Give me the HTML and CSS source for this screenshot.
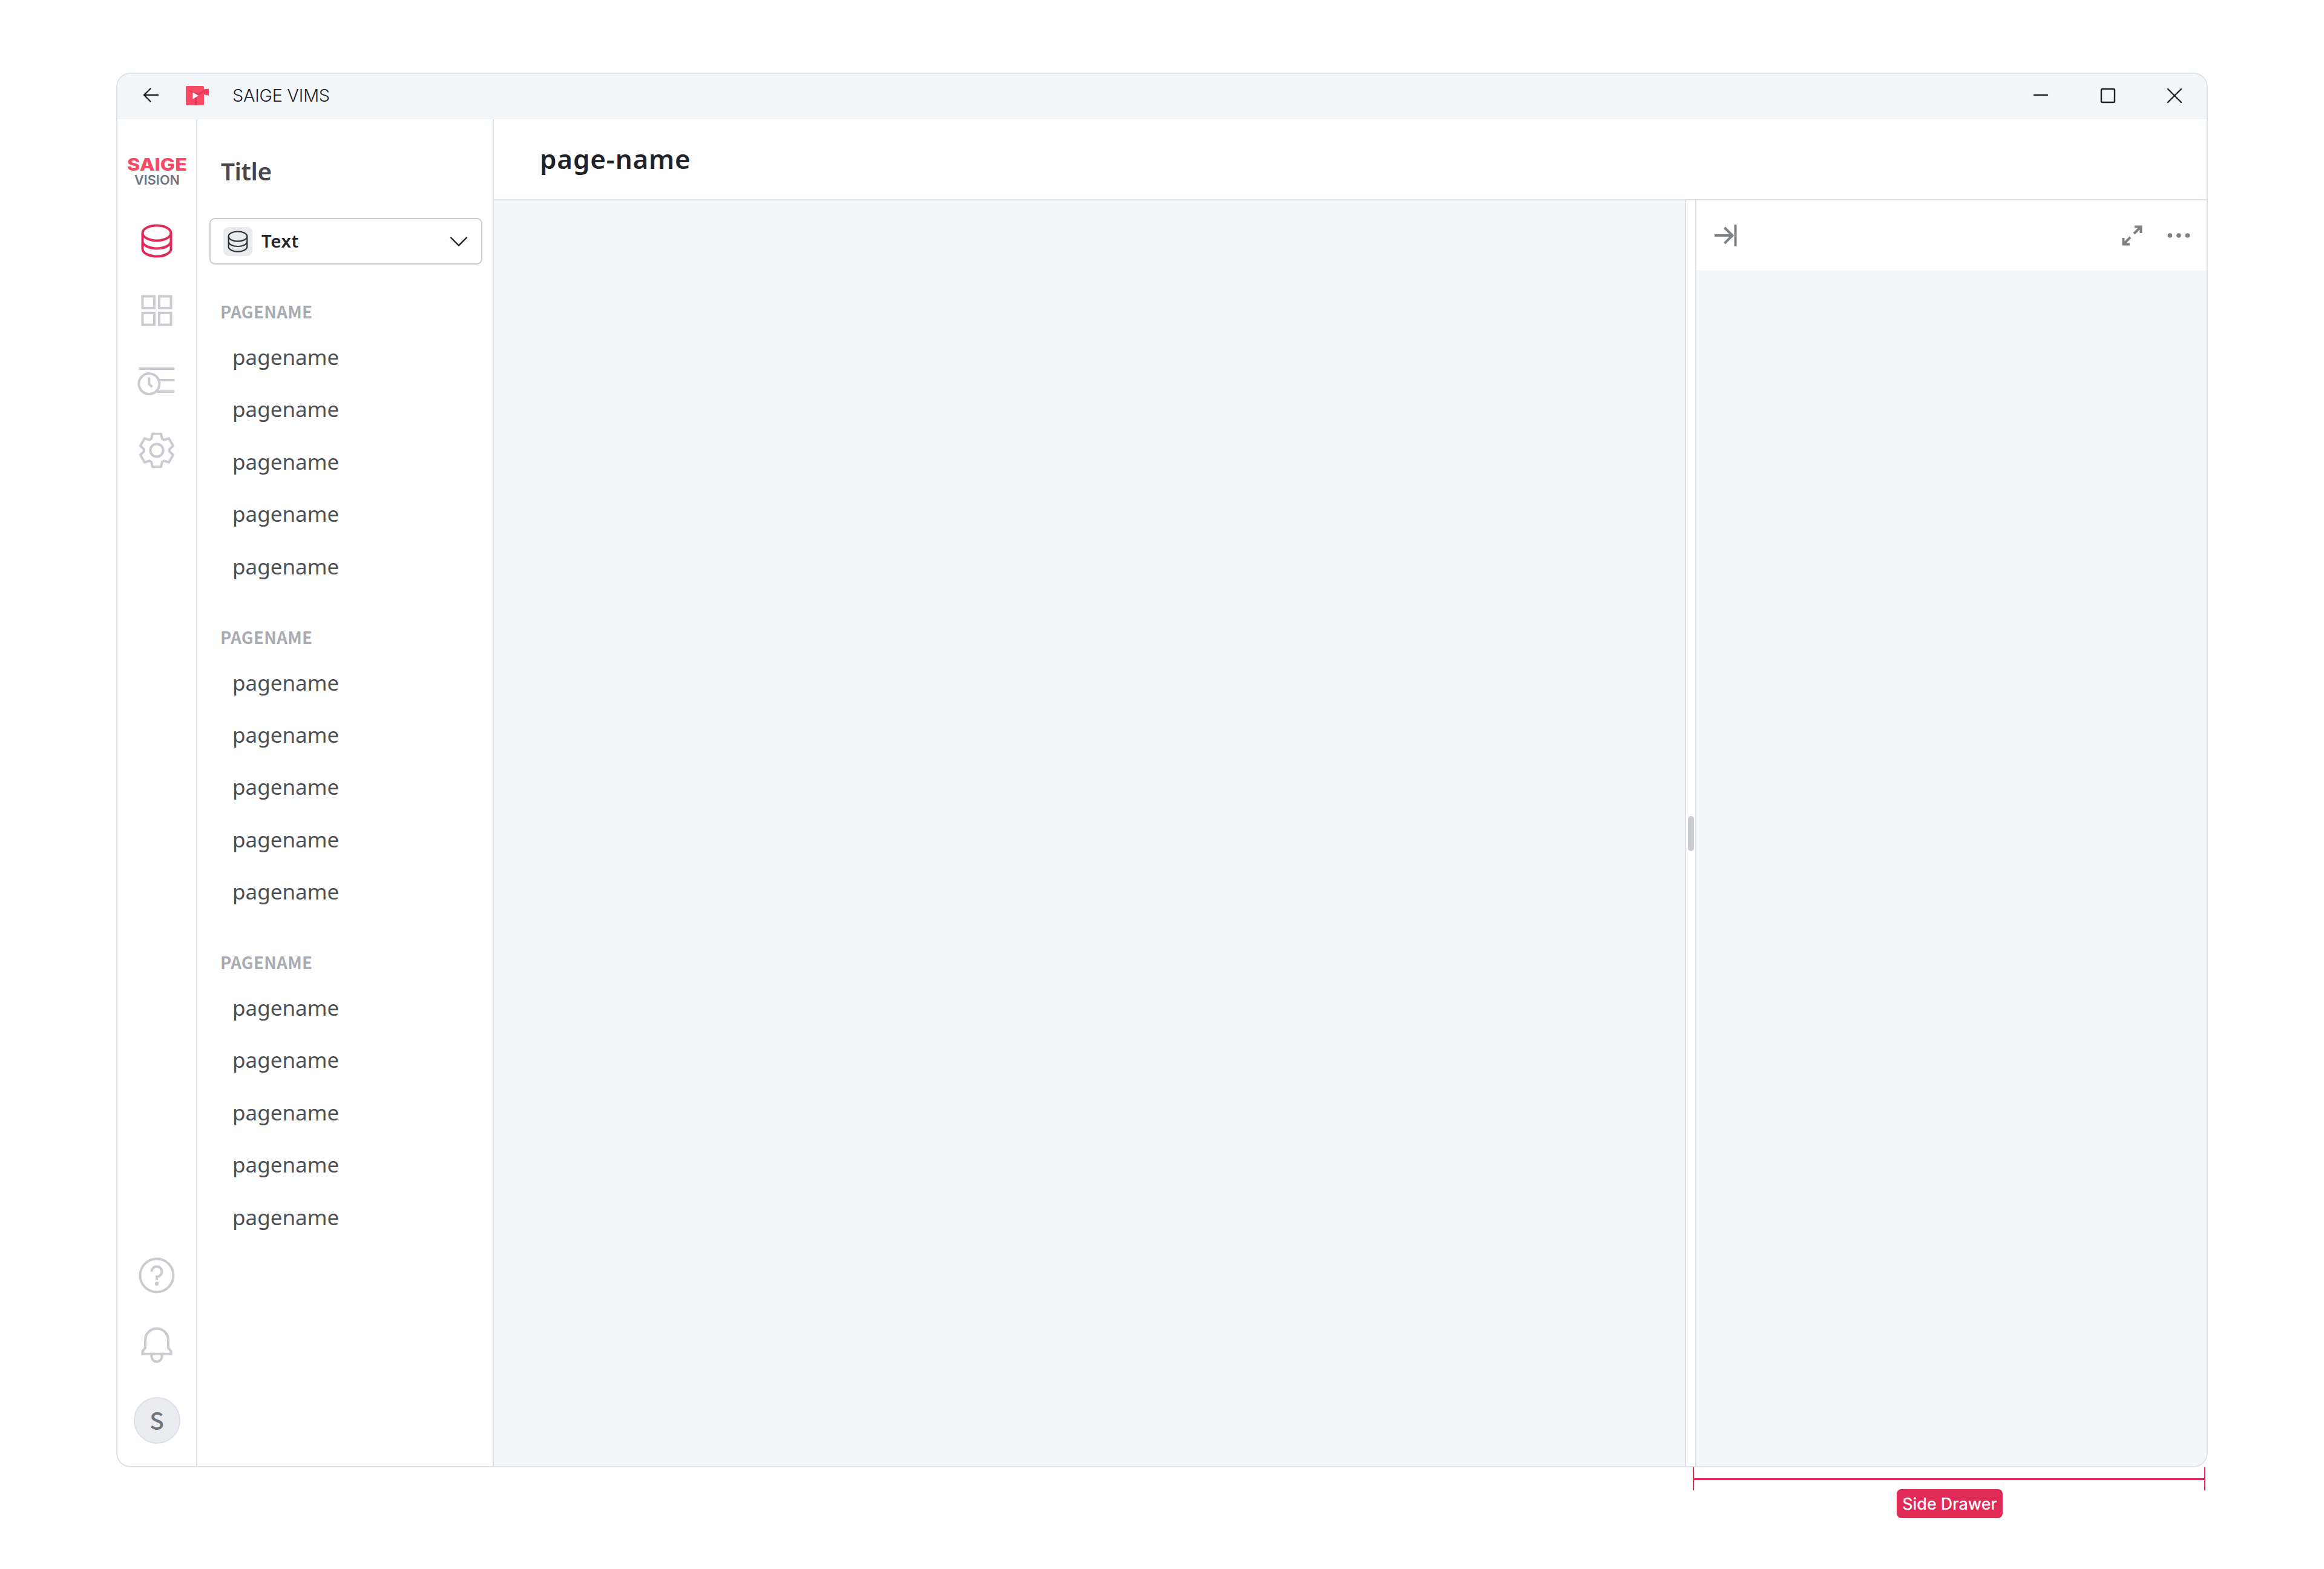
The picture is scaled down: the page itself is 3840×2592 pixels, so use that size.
FILE: index.html
```
<!DOCTYPE html>
<html lang="en">
<head>
    <meta charset="UTF-8">
    <meta name="viewport" content="width=device-width, initial-scale=1.0">
    <title>SAIGE VIMS</title>
    <link rel="stylesheet" href="styles.css">
</head>
<body>
    <div class="window">
        <header class="titlebar">
            <svg class="back" width="28" height="28" viewBox="-14 -14 28 28"><path d="M12 0H-11M-.5-10.5L-11 0L-.5 10.5"/></svg>
            <svg class="app-logo" width="40" height="34" viewBox="0 0 40 34">
                <rect x="0" y="1" width="30" height="32" rx="2" fill="#f94965"/>
                <path d="M30 6.500L38 5.500V17L30 15Z" fill="#ee3f5c"/>
                <path d="M1 6L11.500 13V22L15 20.500V33H18V19L21 17L30 11V8L21 13L12 11Z" fill="#e5375a"/>
                <path d="M11.500 11.500L21 17L11.500 22.500Z" fill="#fff"/>
            </svg>
            <span class="app-name">SAIGE VIMS</span>
            <div class="window-buttons">
                <svg width="28" height="28" viewBox="-14 -14 28 28"><path d="M-11-1H11"/></svg>
                <svg width="28" height="28" viewBox="-14 -14 28 28"><rect x="-11" y="-11" width="22" height="22" rx="2"/></svg>
                <svg width="28" height="28" viewBox="-14 -14 28 28"><path d="M-11-11L11 11M11-11L-11 11"/></svg>
            </div>
        </header>

        <div class="main">
            <nav class="rail">
                <svg class="brand" width="120" height="64" viewBox="-10 -8 120 64">
                    <text class="brand-top" x="1" y="23" textLength="99" lengthAdjust="spacingAndGlyphs">SAIGE</text>
                    <text class="brand-sub" x="13" y="45.500" textLength="75" lengthAdjust="spacingAndGlyphs">VISION</text>
                </svg>
                <svg class="icon active" width="64" height="64" viewBox="-32 -32 64 64">
                    <ellipse cx="0" cy="-13" rx="23.500" ry="12.500"/>
                    <path d="M-23.500-13V13C-23.500 20-13 25.500 0 25.500S23.500 20 23.500 13V-13M-23.500 0C-23.500 7-13 12.500 0 12.500S23.500 7 23.500 0"/>
                </svg>
                <svg class="icon" width="64" height="64" viewBox="-32 -32 64 64">
                    <path d="M-23.500-23.500H-4V-4H-23.500ZM4-23.500H23.500V-4H4ZM-23.500 4H-4V23.500H-23.500ZM4 4H23.500V23.500H4Z"/>
                </svg>
                <svg class="icon" width="64" height="64" viewBox="-32 -32 64 64">
                    <path d="M-29.500-19H29.500M4 0H29.500M0 19H29.500"/>
                    <circle cx="-12.600" cy="6" r="17" fill="#fff"/>
                    <path d="M-12.600-4.500V6.500L-7.500 11.500"/>
                </svg>
                <svg class="icon" width="64" height="64" viewBox="-32 -32 64 64">
                    <path d="M-7-27.300H7L9-19L12-17.300L20.100-19.700L27.100-7.600L21-1.700V1.700L27.100 7.600L20.100 19.700L12 17.300L9 19L7 27.300H-7L-9 19L-12 17.300L-20.100 19.700L-27.100 7.600L-21 1.700V-1.700L-27.100-7.600L-20.100-19.700L-12-17.300L-9-19Z"/>
                    <circle r="10.600"/>
                </svg>
                <div class="rail-bottom">
                    <svg class="icon" width="64" height="64" viewBox="-32 -32 64 64">
                        <circle r="27.500"/>
                        <path d="M-8.500-6.300A8.500 8.500 0 1 1 0 2.200V7.700"/>
                        <circle class="dot" cx="0" cy="13.700" r="3.200"/>
                    </svg>
                    <svg class="icon" width="64" height="64" viewBox="-32 -32 64 64">
                        <path d="M-19-8.300A19 19 0 0 1 19-8.300V4.500L23.500 10.500V14.700H-23.500V10.500L-19 4.500Z"/>
                        <path d="M-8.500 15V19A8.500 8.500 0 0 0 8.500 19V15"/>
                    </svg>
                    <div class="avatar">S</div>
                </div>
            </nav>

            <aside class="sidebar">
                <h2>Title</h2>
                <div class="select">
                    <span class="select-icon">
                        <svg width="36" height="38" viewBox="-18 -19 36 38">
                            <ellipse cx="0" cy="-8.500" rx="15.300" ry="8.200"/>
                            <path d="M-15.300-8.500V8.500C-15.300 13-8.500 16.700 0 16.700S15.300 13 15.300 8.500V-8.500M-15.300 0C-15.300 4.500-8.500 8 0 8S15.300 4.500 15.300 0"/>
                        </svg>
                    </span>
                    <span class="select-text">Text</span>
                    <svg class="chevron" width="30" height="18" viewBox="-15 -9 30 18"><path d="M-13.500-7L0 6.500L13.500-7"/></svg>
                </div>
                <div class="group">
                    <h3>PAGENAME</h3>
                    <ul>
                        <li>pagename</li>
                        <li>pagename</li>
                        <li>pagename</li>
                        <li>pagename</li>
                        <li>pagename</li>
                    </ul>
                </div>
                <div class="group">
                    <h3>PAGENAME</h3>
                    <ul>
                        <li>pagename</li>
                        <li>pagename</li>
                        <li>pagename</li>
                        <li>pagename</li>
                        <li>pagename</li>
                    </ul>
                </div>
                <div class="group">
                    <h3>PAGENAME</h3>
                    <ul>
                        <li>pagename</li>
                        <li>pagename</li>
                        <li>pagename</li>
                        <li>pagename</li>
                        <li>pagename</li>
                    </ul>
                </div>
            </aside>

            <section class="page">
                <div class="page-header"><h1>page-name</h1></div>
                <div class="page-body">
                    <div class="content"></div>
                    <div class="splitter"><div class="handle"></div></div>
                    <div class="drawer">
                        <div class="drawer-header">
                            <svg class="collapse" width="40" height="40" viewBox="-20 -20 40 40"><path d="M-18 0H12M-1.500-13L11.500 0L-1.500 13M16.500-18V18"/></svg>
                            <svg class="expand" width="40" height="40" viewBox="-20 -20 40 40"><path d="M3-3L14-14M4-14.500H14.500V-4M-3 3L-14 14M-14.500 4V14.500H-4"/></svg>
                            <svg class="more" width="40" height="40" viewBox="-20 -20 40 40"><circle cx="-14.500" r="3.800"/><circle r="3.800"/><circle cx="14.500" r="3.800"/></svg>
                        </div>
                    </div>
                </div>
            </section>
        </div>
    </div>

    <div class="measure">
        <div class="measure-line"></div>
        <span class="measure-label">Side Drawer</span>
    </div>
</body>
</html>
```
FILE: styles.css
```
* {
    box-sizing: border-box;
}
body {
    margin: 0;
    padding: 120px 192px 0;
    height: 2592px;
    background-color: #fff;
    font-family: 'Noto Sans', sans-serif;
    color: #1f2228;
}
h1, h2, h3, ul {
    margin: 0;
    padding: 0;
}
svg {
    display: block;
    flex: none;
    fill: none;
}
.window {
    display: flex;
    flex-direction: column;
    height: 2304px;
    border: 2px solid #dce0e8;
    border-radius: 24px;
    background-color: #fff;
    overflow: hidden;
}

/* title bar */
.titlebar {
    display: flex;
    align-items: center;
    flex: none;
    height: 75px;
    padding: 0 39px 4px 41px;
    background-color: #f2f6f9;
}
.back, .window-buttons svg {
    stroke: #1f2228;
    stroke-width: 2.4;
    stroke-linecap: round;
    stroke-linejoin: round;
}
.back {
    margin-top: -1px;
}
.app-logo {
    margin-left: 44px;
}
.app-name {
    margin-left: 37px;
    font-family: Inter, sans-serif;
    font-size: 28.8px;
    font-weight: 300;
    letter-spacing: -0.2px;
}
.window-buttons {
    display: flex;
    gap: 82.5px;
    margin-left: auto;
    padding-top: 1px;
}

/* icon rail */
.main {
    display: flex;
    flex: 1;
    min-height: 0;
}
.rail {
    display: flex;
    flex-direction: column;
    align-items: center;
    width: 132px;
    padding: 54px 0 37px;
    border-right: 2px solid #dce0e8;
}
.brand {
    margin-bottom: 51px;
}
.brand-top {
    font: 800 28px Inter, sans-serif;
    fill: #f94965;
}
.brand-sub {
    font: 600 22px Inter, sans-serif;
    fill: #6f7379;
}
.icon {
    margin-bottom: 51.2px;
    stroke: #c9cbd0;
    stroke-width: 4;
}
.icon.active {
    stroke: #e02b56;
}
.icon .dot {
    fill: #c9cbd0;
    stroke: none;
}
.rail-bottom {
    display: flex;
    flex-direction: column;
    align-items: center;
    margin-top: auto;
}
.rail-bottom .icon + .avatar {
    margin-top: 3px;
}
.avatar {
    width: 77px;
    height: 77px;
    border: 2px solid #dce0e8;
    border-radius: 50%;
    background-color: #ebecf0;
    font: 500 39px/71px 'Noto Sans CJK KR', sans-serif;
    color: #6f7379;
    text-align: center;
}

/* sidebar */
.sidebar {
    width: 490px;
    padding: 0 18px;
    border-right: 2px solid #dce0e8;
}
.sidebar h2 {
    padding: 56px 0 0 21px;
    font-size: 40.5px;
    line-height: 60px;
    font-weight: 600;
    letter-spacing: -0.5px;
    color: #44464b;
}
.select {
    display: flex;
    align-items: center;
    width: 451px;
    height: 77px;
    margin: 47px 0 0 2px;
    padding: 0 22px 0 21px;
    border: 2px solid #c9cbd0;
    border-radius: 9px;
}
.select-icon {
    display: flex;
    align-items: center;
    justify-content: center;
    width: 48px;
    height: 48px;
    border-radius: 9px;
    background-color: #e9ebef;
}
.select-icon svg {
    stroke: #2d3036;
    stroke-width: 2.2;
}
.select-text {
    margin: -2px 0 0 15px;
    font-size: 29.5px;
    font-weight: 600;
    letter-spacing: 0.5px;
}
.chevron {
    margin-left: auto;
    stroke: #1f2228;
    stroke-width: 2.4;
}
.group {
    padding-left: 20px;
}
.group h3 {
    height: 60px;
    font: 700 27.6px/55px 'Noto Sans CJK KR', sans-serif;
    letter-spacing: 0.3px;
    color: #a8acb2;
}
.group ul {
    list-style: none;
}
.group li {
    height: 86.4px;
    padding-left: 20px;
    font-size: 35px;
    line-height: 86.4px;
    color: #4c4f54;
}
.select + .group {
    margin-top: 50px;
}
.group + .group {
    margin-top: 45.6px;
}

/* page area */
.page {
    display: flex;
    flex-direction: column;
    flex: 1;
}
.page-header {
    display: flex;
    align-items: center;
    height: 134px;
    padding: 0 0 3px 76px;
    border-bottom: 2px solid #dce0e8;
}
.page-header h1 {
    font-size: 44px;
    font-weight: 600;
    letter-spacing: 0.8px;
}
.page-body {
    display: flex;
    flex: 1;
}
.content {
    flex: 1;
    background-color: #f2f6f9;
}
.splitter {
    display: flex;
    align-items: center;
    justify-content: center;
    width: 19px;
    border: solid #dce0e8;
    border-width: 0 2px;
}
.handle {
    flex: none;
    width: 10px;
    height: 58px;
    border-radius: 5px;
    background-color: #c9cbd0;
}
.drawer {
    width: 843px;
    background-color: #f2f6f9;
}
.drawer-header {
    display: flex;
    align-items: center;
    height: 116px;
    padding: 0 26px 0 28px;
    background-color: #fff;
}
.drawer-header svg {
    stroke: #7d8085;
    stroke-width: 4;
}
.expand {
    margin-left: auto;
}
.drawer-header .more {
    margin-left: 37px;
    fill: #7d8085;
    stroke: none;
}

/* width marker below the window */
.measure {
    display: flex;
    flex-direction: column;
    align-items: center;
    width: 847px;
    margin-left: auto;
    margin-right: 4px;
}
.measure-line {
    width: 100%;
    height: 38px;
    border: solid #e02b56;
    border-width: 0 2px;
    background: linear-gradient(#e02b56, #e02b56) 0 18px / 100% 3px no-repeat;
}
.measure-label {
    height: 48px;
    margin: -2px 0 0 2px;
    padding: 0 9px;
    border-radius: 8px;
    background-color: #e02b56;
    font: 500 26.9px/48px Inter, sans-serif;
    color: #fff;
}
```
